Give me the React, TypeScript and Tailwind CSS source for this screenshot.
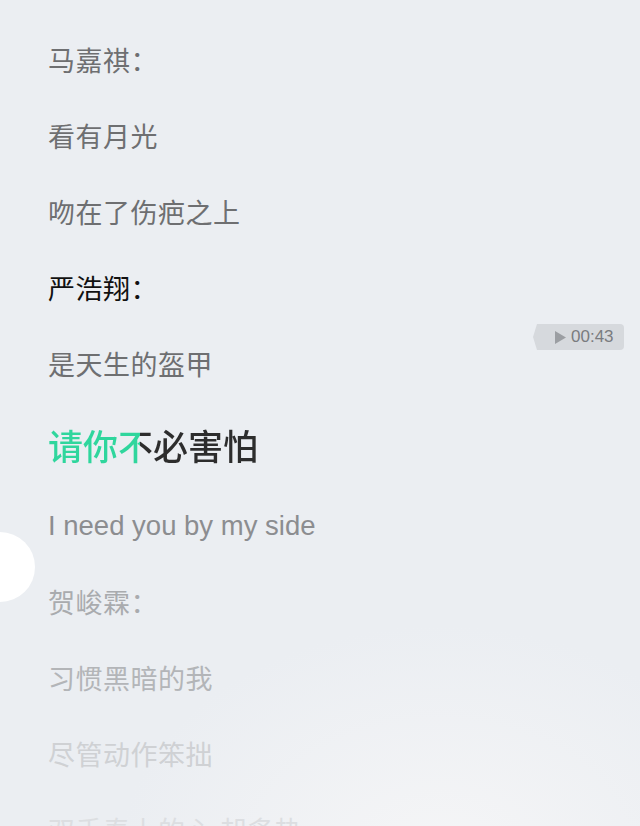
import React from 'react';

type Line = { text: string; tone: string };

const before: Line[] = [
  { text: '马嘉祺：', tone: 'text-[#6e6f71]' },
  { text: '看有月光', tone: 'text-[#6e6f71]' },
  { text: '吻在了伤疤之上', tone: 'text-[#6e6f71]' },
  { text: '严浩翔：', tone: 'text-[#111111]' },
  { text: '是天生的盔甲', tone: 'text-[#6e6f71]' },
];

const after: Line[] = [
  { text: '贺峻霖：', tone: 'text-[#a9abae]' },
  { text: '习惯黑暗的我', tone: 'text-[#b3b5b8]' },
  { text: '尽管动作笨拙', tone: 'text-[#cfd1d4]' },
  { text: '双手奉上的心 却炙热', tone: 'text-[#dcdee1]' },
];

const font = "font-['Noto_Sans_CJK_SC','Noto_Sans',sans-serif]";

const LyricLine: React.FC<{ line: Line }> = ({ line }) => (
  <div className={`h-[76px] flex items-center text-[27px] tracking-[0.5px] ${line.tone}`}>{line.text}</div>
);

export default function App() {
  return (
    <div className={`relative w-[640px] h-[826px] overflow-hidden bg-[#ebeef2] ${font}`}>
      <div className="absolute right-[-120px] bottom-[-260px] w-[640px] h-[460px] rounded-full bg-[radial-gradient(closest-side,#f6f6f7,#ebeef2)] opacity-90" />

      <div className="relative flex flex-col pl-[48px] pt-[22px]">
        {before.map((l, i) => (
          <LyricLine key={i} line={l} />
        ))}

        <div className="h-[86px] flex items-center">
          <span className="text-[35px] font-medium bg-[linear-gradient(90deg,#2fd69d_92px,#2d2d2d_92px)] bg-clip-text text-transparent">
            请你不必害怕
          </span>
        </div>

        <div className="h-[76px] flex items-center text-[27.5px] text-[#8c8d90] font-['Liberation_Sans','Noto_Sans',sans-serif]">
          I need you by my side
        </div>

        {after.map((l, i) => (
          <LyricLine key={i} line={l} />
        ))}
      </div>

      <div className="absolute left-[-35px] top-[532px] w-[70px] h-[70px] rounded-full bg-white" />

      <div className="absolute left-[533px] top-[324px] flex items-center h-[26px]">
        <svg width="12" height="26" viewBox="0 0 12 26">
          <path d="M12 0 L4 0 L0 13 L4 26 L12 26 Z" fill="#d6d9dd" />
        </svg>
        <div className="h-[26px] flex items-center gap-[5px] pl-[10px] pr-[10px] bg-[#d6d9dd] rounded-r-[4px]">
          <svg width="11" height="13" viewBox="0 0 11 13">
            <path d="M0 0 L11 6.5 L0 13 Z" fill="#9b9ea2" />
          </svg>
          <span className="text-[17px] text-[#7a7c80] font-['Liberation_Sans',sans-serif]">00:43</span>
        </div>
      </div>
    </div>
  );
}
